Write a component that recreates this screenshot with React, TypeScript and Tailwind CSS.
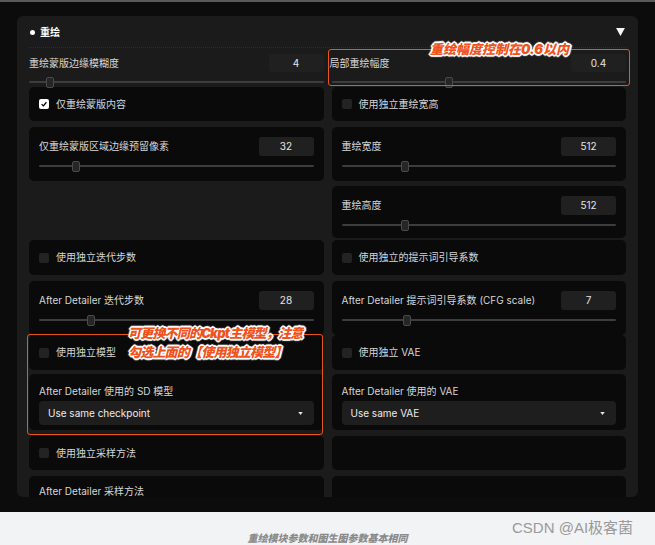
import type { ReactNode } from "react";

const FONT = "font-['Inter','Noto_Sans_CJK_SC',sans-serif]";

function Slider({ value }: { value: number }) {
  return (
    <div className="relative h-[10px]">
      <div className="absolute left-0 right-0 top-[4px] h-[2px] rounded bg-[#3d3d3d]" />
      <div
        className="absolute top-0 h-[11px] w-[8px] -translate-x-1/2 rounded-[2px] border border-[#4a4a4a] bg-[#262626]"
        style={{ left: `${value * 100}%` }}
      />
    </div>
  );
}

function NumBox({ value, height = "h-[19px]" }: { value: string; height?: string }) {
  return (
    <div
      className={`${height} flex w-[55px] items-center justify-center rounded-[3px] bg-[#202020] text-[10px] text-[#e5e5e5]`}
    >
      {value}
    </div>
  );
}

function SliderCell({ label, value, pos }: { label: string; value: string; pos: number }) {
  return (
    <div className="h-full rounded-[5px] bg-[#0a0a0a] px-[10px] pt-[10px]">
      <div className="flex h-[19px] items-center justify-between">
        <span className="text-[10px] text-[#d6d6d6]">{label}</span>
        <NumBox value={value} />
      </div>
      <div className="mt-[5px]">
        <Slider value={pos} />
      </div>
    </div>
  );
}

function CheckCell({ label, checked = false }: { label: string; checked?: boolean }) {
  return (
    <div className="flex h-full items-center gap-[7px] rounded-[5px] bg-[#0a0a0a] px-[10px]">
      {checked ? (
        <div className="flex h-[10px] w-[10px] items-center justify-center rounded-[2px] bg-white">
          <svg viewBox="0 0 10 10" className="h-[8px] w-[8px]">
            <path d="M2 5.2 L4.2 7.3 L8 2.8" fill="none" stroke="#000" strokeWidth="1.6" />
          </svg>
        </div>
      ) : (
        <div className="h-[10px] w-[10px] rounded-[2px] bg-[#232323]" />
      )}
      <span className="text-[10px] text-[#d6d6d6]">{label}</span>
    </div>
  );
}

function SelectCell({ label, value }: { label: string; value: string }) {
  return (
    <div className="h-full rounded-[5px] bg-[#0a0a0a] px-[10px] pt-[10px]">
      <div className="h-[14px] text-[10px] leading-[14px] text-[#d6d6d6]">{label}</div>
      <div className="mt-[3px] flex h-[24px] items-center justify-between rounded-[4px] bg-[#1e1e1e] pl-[9px] pr-[11px]">
        <span className="text-[10px] text-[#ececec]">{value}</span>
        <svg viewBox="0 0 6 4" className="h-[3px] w-[5px]">
          <polygon points="0,0 6,0 3,4" fill="#e5e5e5" />
        </svg>
      </div>
    </div>
  );
}

function Row({ h, mt, left, right }: { h: string; mt: string; left?: ReactNode; right?: ReactNode }) {
  return (
    <div className={`grid grid-cols-2 gap-x-2 ${h} ${mt}`}>
      <div>{left}</div>
      <div>{right}</div>
    </div>
  );
}

function Note({ children, tight = false }: { children: ReactNode; tight?: boolean }) {
  return (
    <span
      className={`${tight ? "tracking-[-0.8px]" : ""} text-[13px] font-black italic text-[#f0521c] [text-shadow:1px_0_0_#fff,-1px_0_0_#fff,0_1px_0_#fff,0_-1px_0_#fff,1px_1px_0_#fff,-1px_-1px_0_#fff,1px_-1px_0_#fff,-1px_1px_0_#fff,2px_0_1px_#fff,-2px_0_1px_#fff,0_2px_1px_#fff,0_-2px_1px_#fff]`}
    >
      {children}
    </span>
  );
}

export default function App() {
  return (
    <div className={`relative flex h-[545px] w-[655px] flex-col overflow-hidden ${FONT}`}>
      <div className="h-[513px] border-t-2 border-[#5a5a5a] bg-[#0c0c0c] px-[17px] pt-[14px]">
        <div className="h-[481px] overflow-hidden rounded-[6px] bg-[#1b1b1b] px-3">
          <div className="flex h-[32px] items-center justify-between border-b border-dotted border-[#2c2c2c] pt-[1px]">
            <div className="flex items-center gap-[5px] pl-[1px]">
              <div className="h-[5px] w-[5px] rounded-full bg-white" />
              <span className="text-[10px] font-bold text-white">重绘</span>
            </div>
            <svg viewBox="0 0 10 9" className="mr-[1px] h-[8px] w-[9px]">
              <polygon points="0,0 10,0 5,9" fill="#f5f5f5" />
            </svg>
          </div>

          <Row
            h="h-[37px]"
            mt="mt-[2px]"
            left={
              <div className="pt-[4px]">
                <div className="flex h-[18px] items-center justify-between">
                  <span className="text-[10px] text-[#d6d6d6]">重绘蒙版边缘模糊度</span>
                  <NumBox value="4" height="h-[18px]" />
                </div>
                <div className="mt-[5px]">
                  <Slider value={0.07} />
                </div>
              </div>
            }
            right={
              <div className="pt-[4px]">
                <div className="flex h-[18px] items-center justify-between">
                  <span className="-ml-[2px] text-[10px] text-[#d6d6d6]">局部重绘幅度</span>
                  <NumBox value="0.4" height="h-[18px]" />
                </div>
                <div className="mt-[5px]">
                  <Slider value={0.4} />
                </div>
              </div>
            }
          />
          <Row
            h="h-[34px]"
            mt="mt-0"
            left={<CheckCell label="仅重绘蒙版内容" checked />}
            right={<CheckCell label="使用独立重绘宽高" />}
          />
          <Row
            h="h-[54px]"
            mt="mt-[6px]"
            left={<SliderCell label="仅重绘蒙版区域边缘预留像素" value="32" pos={0.135} />}
            right={<SliderCell label="重绘宽度" value="512" pos={0.233} />}
          />
          <Row
            h="h-[52px]"
            mt="mt-[5px]"
            right={<SliderCell label="重绘高度" value="512" pos={0.233} />}
          />
          <Row
            h="h-[35px]"
            mt="mt-[2px]"
            left={<CheckCell label="使用独立迭代步数" />}
            right={<CheckCell label="使用独立的提示词引导系数" />}
          />
          <Row
            h="h-[54px]"
            mt="mt-[6px]"
            left={<SliderCell label="After Detailer 迭代步数" value="28" pos={0.19} />}
            right={<SliderCell label="After Detailer 提示词引导系数 (CFG scale)" value="7" pos={0.24} />}
          />
          <Row
            h="h-[35px]"
            mt="mt-0"
            left={<CheckCell label="使用独立模型" />}
            right={<CheckCell label="使用独立 VAE" />}
          />
          <Row
            h="h-[56px]"
            mt="mt-[4px]"
            left={<SelectCell label="After Detailer 使用的 SD 模型" value="Use same checkpoint" />}
            right={<SelectCell label="After Detailer 使用的 VAE" value="Use same VAE" />}
          />
          <Row
            h="h-[34px]"
            mt="mt-[6px]"
            left={<CheckCell label="使用独立采样方法" />}
            right={<div className="h-full rounded-[5px] bg-[#0a0a0a]" />}
          />
          <Row
            h="h-[56px]"
            mt="mt-[6px]"
            left={
              <div className="h-full rounded-[5px] bg-[#0a0a0a] px-[10px] pt-[8px]">
                <div className="h-[14px] text-[10px] leading-[14px] text-[#d6d6d6]">After Detailer 采样方法</div>
              </div>
            }
            right={<div className="h-full rounded-[5px] bg-[#0a0a0a]" />}
          />
        </div>
      </div>

      <div className="flex-1 bg-[#f2f3f5] pt-[17px] text-center leading-[14px]">
        <span className="text-[10px] font-black italic text-[#8a8a8a]">重绘模块参数和图生图参数基本相同</span>
      </div>

      {/* annotations drawn over the screenshot */}
      <div className="absolute left-[328px] top-[49px] h-[37px] w-[302px] rounded-[3px] border border-[#e8551e]" />
      <div className="absolute left-[430px] top-[39px] leading-[18px]">
        <Note>重绘幅度控制在0.6以内</Note>
      </div>
      <div className="absolute left-[27px] top-[334px] h-[101px] w-[296px] rounded-[3px] border border-[#e8551e]" />
      <div className="absolute left-[128px] top-[324px] flex flex-col leading-[19px]">
        <Note tight>可更换不同的Ckpt主模型，注意</Note>
        <Note tight>勾选上面的【使用独立模型】</Note>
      </div>
      <div className="absolute left-[512px] top-[517px] font-['Liberation_Sans','Noto_Sans_CJK_SC',sans-serif] text-[15px] text-[#9a9a9a]">
        CSDN @AI极客菌
      </div>
    </div>
  );
}
